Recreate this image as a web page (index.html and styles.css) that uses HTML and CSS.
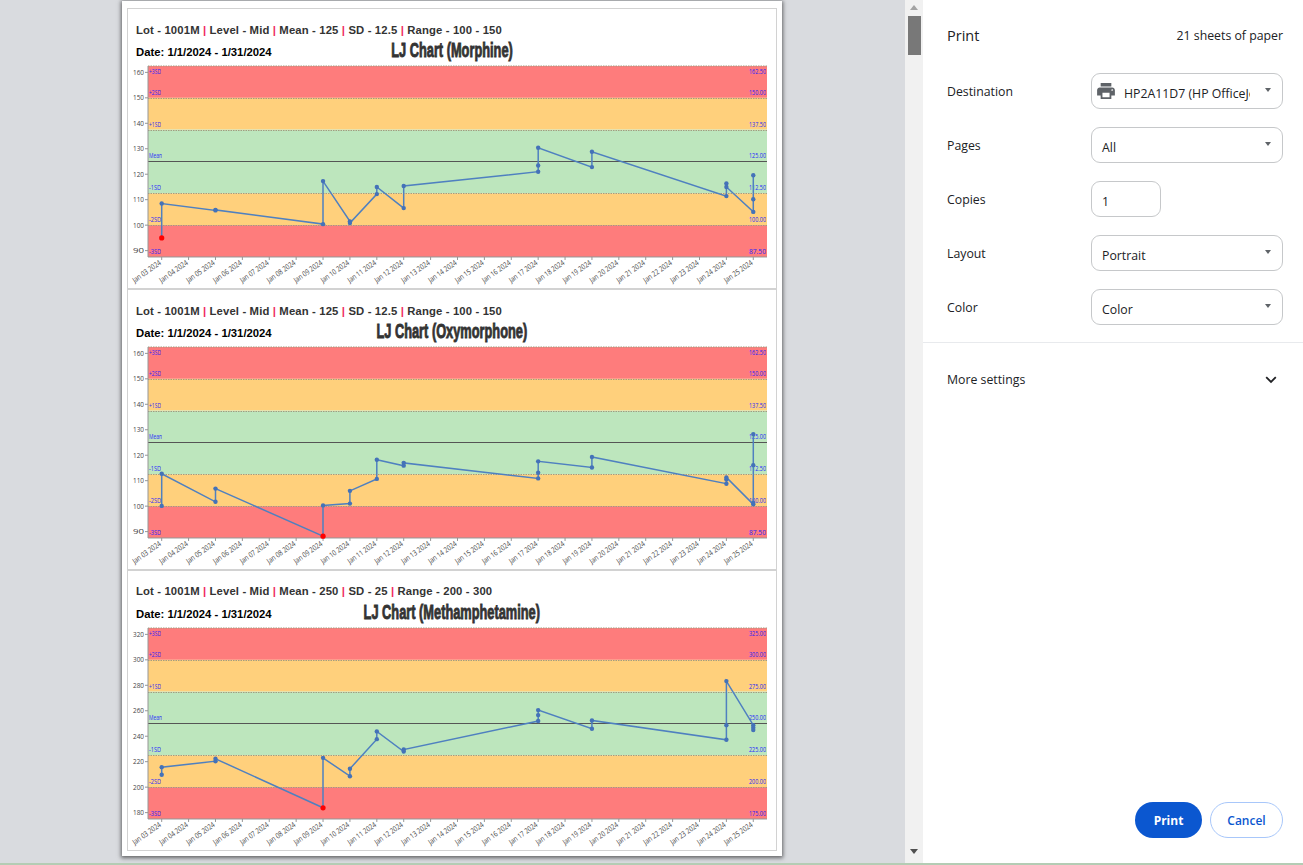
FILE: index.html
```html
<!DOCTYPE html>
<html lang="en">
<head>
  <meta charset="UTF-8" />
  <meta name="viewport" content="width=device-width, initial-scale=1.0" />
  <title>Print</title>
  <link rel="stylesheet" href="styles.css">
</head>
<body>
  <div class="window">
    <div class="preview">
      <div class="sheet" id="sheet"></div>
    </div>

    <div class="scrollbar">
      <span class="scroll-up"></span>
      <span class="scroll-thumb"></span>
      <span class="scroll-down"></span>
    </div>

    <aside class="panel">
      <div class="panel-head">
        <h1>Print</h1>
        <span class="sheets">21 sheets of paper</span>
      </div>

      <div class="settings">
        <div class="row">
          <span class="row-label">Destination</span>
          <div class="select select-dest">
            <svg class="printer" viewBox="2 3 20 18" width="18" height="16">
              <path d="M19 8H5c-1.66 0-3 1.34-3 3v6h4v4h12v-4h4v-6c0-1.66-1.34-3-3-3zm-3 11H8v-5h8v5zm3-7c-.55 0-1-.45-1-1s.45-1 1-1 1 .45 1 1-.45 1-1 1zm-1-9H6v4h12V3z"/>
            </svg>
            <span class="dest-name">HP2A11D7 (HP OfficeJet Pro)</span>
            <span class="caret"></span>
          </div>
        </div>
        <div class="row">
          <span class="row-label">Pages</span>
          <div class="select"><span>All</span><span class="caret"></span></div>
        </div>
        <div class="row">
          <span class="row-label">Copies</span>
          <div class="select select-copies"><span>1</span></div>
        </div>
        <div class="row">
          <span class="row-label">Layout</span>
          <div class="select"><span>Portrait</span><span class="caret"></span></div>
        </div>
        <div class="row">
          <span class="row-label">Color</span>
          <div class="select"><span>Color</span><span class="caret"></span></div>
        </div>
      </div>

      <div class="more">
        <span>More settings</span>
        <svg viewBox="0 0 12 8" width="12" height="8">
          <path d="M1.2 1.2 6 6l4.8-4.8" fill="none" stroke="#202124" stroke-width="1.8"/>
        </svg>
      </div>

      <div class="actions">
        <button class="btn btn-print">Print</button>
        <button class="btn btn-cancel">Cancel</button>
      </div>
    </aside>
  </div>
  <div class="strip"></div>

  <script src="charts.js"></script>
</body>
</html>
```

FILE: styles.css
```css
* {
  box-sizing: border-box;
}

body {
  margin: 0;
  height: 100vh;
  display: flex;
  flex-direction: column;
  overflow: hidden;
  background: #fff;
  font-family: "Open Sans", "Noto Sans", sans-serif;
  color: #202124;
}

.window {
  flex: 1;
  display: flex;
  min-height: 0;
}

.strip {
  height: 2px;
  background: #b4ccb4;
}

/* preview side */
.preview {
  width: 905px;
  background: #d9dbdf;
  padding: 1px 0 0 122px;
}

.sheet {
  width: 660px;
  height: 855px;
  background: #fff;
  padding: 7px 5px 0 5px;
  box-shadow: 0 1px 4px 1px rgba(0, 0, 0, 0.55);
}

.card {
  height: 281px;
  border: 1px solid #d2d2d2;
  background: #fff;
  font-family: "Liberation Sans", Arial, sans-serif;
}

.lot {
  padding: 14px 0 0 8px;
  height: 32px;
  font-size: 11.3px;
  font-weight: bold;
  line-height: 14px;
  color: #333;
  letter-spacing: 0.14px;
}

.card:last-child .lot {
  padding-top: 13px;
}

.lot b {
  color: #f0285f;
}

.head-row {
  display: grid;
  grid-template-columns: 1fr auto 1fr;
  align-items: center;
  height: 21px;
}

.date {
  padding-left: 8px;
  margin-top: -1px;
  font-size: 11.3px;
  font-weight: bold;
  color: #000;
}

/* the reference uses an Impact style face, squeezed to fit */
.chart-title {
  display: inline-block;
  font-size: 20px;
  font-weight: bold;
  color: #333;
  -webkit-text-stroke: 0.9px #333;
  transform: translateY(-2px) scaleX(0.64);
}

.plot {
  display: block;
  width: 648px;
  height: 224px;
}

.band-red { fill: #fe7c7c; }
.band-orange { fill: #ffd07c; }
.band-green { fill: #bde6bd; }

.limit {
  stroke: #a39c80;
  stroke-width: 1;
  stroke-dasharray: 1.5 1;
}

.mean {
  stroke: #555;
  stroke-width: 1;
}

.axis {
  stroke: #969696;
  stroke-width: 1;
}

.tick-label {
  font-family: "Open Sans", sans-serif;
  font-size: 7.5px;
  fill: #444;
}

.band-label {
  font-family: "Open Sans", sans-serif;
  font-size: 7px;
  fill: #2020ff;
  opacity: 0.95;
}

.series {
  fill: none;
  stroke: #4f80c0;
  stroke-width: 1.5;
}

.dot { fill: #4472b8; }
.dot-bad { fill: #f00; }

/* scrollbar */
.scrollbar {
  width: 18px;
  background: #f1f1f1;
  display: flex;
  flex-direction: column;
  align-items: center;
  padding: 5px 0 9px;
}

.scroll-up {
  border: 4px solid transparent;
  border-top: 0;
  border-bottom: 5px solid #a3a3a3;
}

.scroll-thumb {
  width: 13px;
  height: 39px;
  margin-top: 6px;
  background: #787878;
}

.scroll-down {
  margin-top: auto;
  border: 4px solid transparent;
  border-bottom: 0;
  border-top: 5px solid #505050;
}

/* settings panel */
.panel {
  flex: 1;
  display: flex;
  flex-direction: column;
  background: #fff;
  font-size: 12.3px;
}

.panel-head {
  display: flex;
  justify-content: space-between;
  align-items: flex-start;
  padding: 25px 20px 0 24px;
  height: 73px;
}

.panel-head h1 {
  margin: 0;
  font-size: 14.5px;
  font-weight: 400;
  line-height: 22px;
}

.sheets {
  line-height: 22px;
}

.settings {
  padding: 0 20px 17px 24px;
  border-bottom: 1px solid #e8eaed;
}

.row {
  display: grid;
  grid-template-columns: 144px 1fr;
  margin-bottom: 18px;
}

.row:last-child {
  margin-bottom: 0;
}

.row-label {
  line-height: 38px;
  height: 36px;
}

.select {
  width: 192px;
  height: 36px;
  border: 1px solid #c6c8ca;
  border-radius: 9px;
  display: flex;
  align-items: center;
  justify-content: space-between;
  padding: 4px 11px 0 10px;
}

.select-dest {
  justify-content: flex-start;
  padding-left: 5px;
}

.select-copies {
  width: 70px;
}

.printer {
  fill: #5f6368;
  flex: none;
  margin-top: -5px;
}

.dest-name {
  width: 126px;
  margin-left: 9px;
  white-space: nowrap;
  overflow: hidden;
}

.caret {
  border: 3.5px solid transparent;
  border-top: 4px solid #5f6368;
  border-bottom: 0;
  margin: -7px 0 0 auto;
}

.more {
  display: flex;
  justify-content: space-between;
  align-items: center;
  padding: 28px 26px 0 24px;
}

.actions {
  margin-top: auto;
  display: flex;
  justify-content: flex-end;
  gap: 8px;
  padding: 0 20px 25px 0;
}

.btn {
  height: 36px;
  border-radius: 18px;
  font-family: "Open Sans", sans-serif;
  font-size: 12px;
  font-weight: 600;
  padding: 0;
}

.btn-print {
  width: 67px;
  border: none;
  background: #0b57d0;
  color: #fff;
  font-weight: 700;
}

.btn-cancel {
  width: 73px;
  border: 1px solid #a8c7fa;
  background: #fff;
  color: #0b57d0;
}
```

FILE: charts.js
```js
const dates = [];
for (let d = 3; d <= 25; d++) {
  dates.push('Jan ' + String(d).padStart(2, '0') + ' 2024');
}

// points are [day index from Jan 03, value], in the order the line runs
const charts = [
  {
    title: 'LJ Chart (Morphine)', mean: 125, sd: 12.5, range: '100 - 150',
    ticks: [90, 100, 110, 120, 130, 140, 150, 160],
    points: [[0, 95], [0, 108.5], [2, 105.8], [2, 106], [6, 100.4], [6, 117.3], [7, 101.5], [7, 100.8],
      [8, 112.2], [8, 115], [9, 106.7], [9, 115.4], [14, 121], [14, 123.4], [14, 130.4], [16, 122.8],
      [16, 128.8], [21, 111.4], [21, 116.4], [21, 115], [22, 105.2], [22, 110.2], [22, 119.6]]
  },
  {
    title: 'LJ Chart (Oxymorphone)', mean: 125, sd: 12.5, range: '100 - 150',
    ticks: [90, 100, 110, 120, 130, 140, 150, 160],
    points: [[0, 100.1], [0, 112.7], [2, 101.7], [2, 106.9], [6, 88.2], [6, 100.3], [7, 101], [7, 106],
      [8, 110.7], [8, 118.2], [9, 115.9], [9, 117], [14, 110.9], [14, 113.1], [14, 117.6], [16, 115.2],
      [16, 119.3], [21, 108.8], [21, 110.5], [21, 111.3], [22, 100.7], [22, 101.3], [22, 116.1], [22, 128.3]]
  },
  {
    title: 'LJ Chart (Methamphetamine)', mean: 250, sd: 25, range: '200 - 300',
    ticks: [180, 200, 220, 240, 260, 280, 300, 320],
    points: [[0, 209.7], [0, 215.7], [2, 220.4], [2, 222.3], [6, 183.8], [6, 223], [7, 208.6], [7, 214.4],
      [8, 237.7], [8, 243.8], [9, 228], [9, 229.6], [14, 251.9], [14, 256.6], [14, 260.5], [16, 245.9],
      [16, 252.4], [21, 237.2], [21, 248.7], [21, 283.3], [22, 248.7], [22, 246.6], [22, 244.8]]
  }
];

const plotLeft = 20;
const plotRight = 639;
const plotTop = 4;
const bandH = 31.83;
const plotBottom = plotTop + bandH * 6;

function buildPlot(c) {
  const y = v => plotTop + (c.mean + 3 * c.sd - v) * (bandH / c.sd);
  const x = d => 33.7 + d * 26.89;
  let s = '<svg class="plot" viewBox="0 0 648 224">';

  const bands = ['red', 'orange', 'green', 'green', 'orange', 'red'];
  bands.forEach((b, i) => {
    s += `<rect class="band-${b}" x="${plotLeft}" y="${plotTop + i * bandH}" width="${plotRight - plotLeft}" height="${bandH}"/>`;
  });

  for (let i = 1; i <= 5; i++) {
    const ly = Math.round(plotTop + i * bandH) + 0.5;
    const cls = i === 3 ? 'mean' : 'limit';
    s += `<line class="${cls}" x1="${plotLeft}" x2="${plotRight}" y1="${ly}" y2="${ly}"/>`;
  }
  s += `<line class="limit" x1="${plotLeft}" x2="${plotRight}" y1="${plotTop}" y2="${plotTop}"/>`;

  s += `<line class="axis" x1="${plotLeft}" x2="${plotLeft}" y1="${plotTop}" y2="${plotBottom}"/>`;
  s += `<line class="axis" x1="${plotLeft}" x2="${plotRight}" y1="${plotBottom}" y2="${plotBottom}"/>`;

  c.ticks.forEach(t => {
    s += `<line class="axis" x1="${plotLeft - 3}" x2="${plotLeft}" y1="${y(t)}" y2="${y(t)}"/>`;
    s += `<text class="tick-label" x="${plotLeft - 4}" y="${y(t) + 2.6}" text-anchor="end" textLength="11" lengthAdjust="spacingAndGlyphs">${t}</text>`;
  });

  const names = ['+3SD', '+2SD', '+1SD', 'Mean', '-1SD', '-2SD', '-3SD'];
  names.forEach((n, i) => {
    const v = c.mean + (3 - i) * c.sd;
    const ly = plotTop + i * bandH;
    const ty = i === 0 ? ly + 7.5 : ly - 3;
    s += `<text class="band-label" x="${plotLeft + 1}" y="${ty}" textLength="${n === 'Mean' ? 13 : 12}" lengthAdjust="spacingAndGlyphs">${n}</text>`;
    s += `<text class="band-label" x="${plotRight - 1}" y="${ty}" text-anchor="end" textLength="17" lengthAdjust="spacingAndGlyphs">${v.toFixed(2)}</text>`;
  });

  dates.forEach((d, i) => {
    s += `<line class="axis" x1="${x(i)}" x2="${x(i)}" y1="${plotBottom}" y2="${plotBottom + 3}"/>`;
    s += `<text class="tick-label" transform="translate(${x(i)} ${plotBottom + 7}) rotate(-35)" text-anchor="end" textLength="33" lengthAdjust="spacingAndGlyphs">${d}</text>`;
  });

  const line = c.points.map(p => x(p[0]).toFixed(1) + ',' + y(p[1]).toFixed(1)).join(' ');
  s += `<polyline class="series" points="${line}"/>`;
  c.points.forEach(p => {
    const bad = p[1] < c.mean - 2 * c.sd;
    s += `<circle class="${bad ? 'dot-bad' : 'dot'}" cx="${x(p[0])}" cy="${y(p[1])}" r="${bad ? 2.6 : 2.2}"/>`;
  });

  return s + '</svg>';
}

const sep = ' <b>|</b> ';
document.getElementById('sheet').innerHTML = charts.map(c => `
  <section class="card">
    <div class="lot">Lot - 1001M${sep}Level - Mid${sep}Mean - ${c.mean}${sep}SD - ${c.sd}${sep}Range - ${c.range}</div>
    <div class="head-row">
      <span class="date">Date: 1/1/2024 - 1/31/2024</span>
      <span class="chart-title">${c.title}</span>
    </div>
    ${buildPlot(c)}
  </section>`).join('');
```
